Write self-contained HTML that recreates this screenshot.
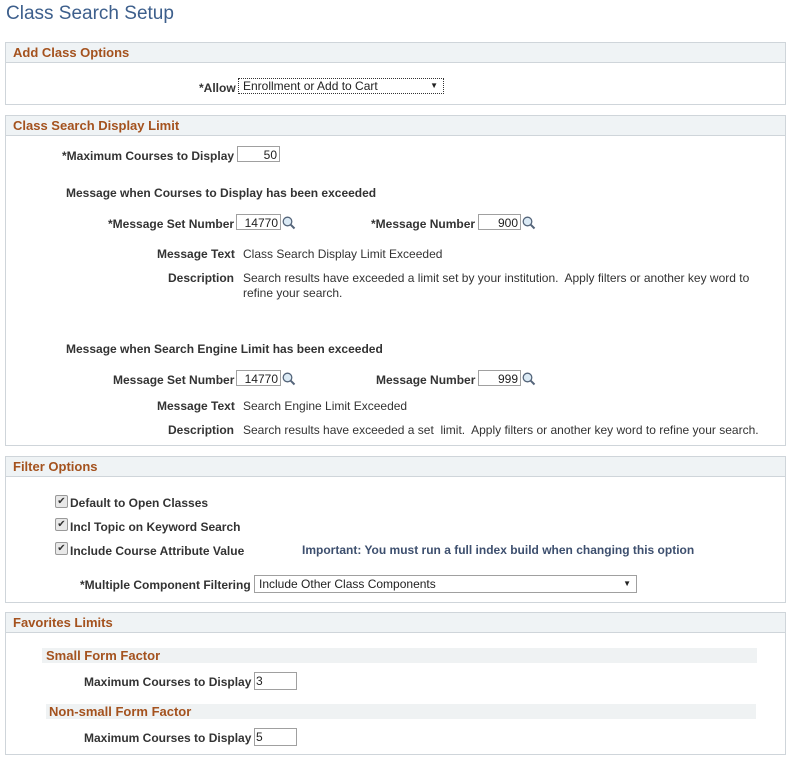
<!DOCTYPE html>
<html><head><style>
body{margin:0;width:791px;height:760px;background:#fff;font-family:"Liberation Sans",Arial,sans-serif;position:relative;overflow:hidden}
.a{position:absolute;white-space:nowrap}
.t{left:6px;top:3px;font-size:19px;color:#3d5f8c}
.box{position:absolute;left:5px;width:779px;border:1px solid #cfd5da;background:#fff}
.hd{height:19px;background:#eff3f5;border-bottom:1px solid #cfd5da;font-weight:bold;color:#a4521e;font-size:13px;line-height:19px;padding-left:7px}
.l{font-size:12px;font-weight:bold;color:#333}
.v{font-size:12px;color:#333}
.in{position:absolute;border:1px solid #a0a0a0;height:16px;font-size:12px;color:#222;line-height:16px;box-sizing:border-box;background:#fff}
.r{text-align:right;padding-right:2px}
.sub{position:absolute;height:15px;background:#eff2f3;font-weight:bold;color:#a4521e;font-size:13px;line-height:15px}
.cb{position:absolute;width:11px;height:11px;border:1px solid #999;background:#e8e8e8;border-radius:2px;font-size:10px;line-height:11px;text-align:center;color:#333}
</style></head><body>
<div class="a t">Class Search Setup</div>

<div class="box" style="top:42px;height:61px"><div class="hd">Add Class Options</div></div>
<div class="a l" style="left:199px;top:81px">*Allow</div>
<div class="in" style="left:238px;top:78px;width:206px;border:1px dotted #333;padding-left:4px;line-height:14px">Enrollment or Add to Cart<span style="position:absolute;right:5px;font-size:8px">&#9660;</span></div>

<div class="box" style="top:115px;height:329px"><div class="hd">Class Search Display Limit</div></div>
<div class="a l" style="left:62px;top:149px">*Maximum Courses to Display</div>
<div class="in r" style="left:237px;top:146px;width:43px">50</div>
<div class="a l" style="left:66px;top:186px">Message when Courses to Display has been exceeded</div>
<div class="a l" style="left:108px;top:217px">*Message Set Number</div>
<div class="in r" style="left:236px;top:214px;width:45px">14770</div>
<svg class="a" style="left:282px;top:216px" width="14" height="14"><circle cx="5.5" cy="5.5" r="4.3" fill="#dbeaf5" stroke="#55657a" stroke-width="1.3"/><line x1="8.6" y1="8.6" x2="12.5" y2="12.5" stroke="#55657a" stroke-width="2"/></svg>
<div class="a l" style="left:371px;top:217px">*Message Number</div>
<div class="in r" style="left:478px;top:214px;width:43px">900</div>
<svg class="a" style="left:522px;top:216px" width="14" height="14"><circle cx="5.5" cy="5.5" r="4.3" fill="#dbeaf5" stroke="#55657a" stroke-width="1.3"/><line x1="8.6" y1="8.6" x2="12.5" y2="12.5" stroke="#55657a" stroke-width="2"/></svg>
<div class="a l" style="left:157px;top:247px">Message Text</div>
<div class="a v" style="left:243px;top:247px">Class Search Display Limit Exceeded</div>
<div class="a l" style="left:168px;top:271px">Description</div>
<div class="a v" style="left:243px;top:271px;line-height:15px">Search results have exceeded a limit set by your institution.&nbsp; Apply filters or another key word to<br>refine your search.</div>
<div class="a l" style="left:66px;top:342px">Message when Search Engine Limit has been exceeded</div>
<div class="a l" style="left:113px;top:373px">Message Set Number</div>
<div class="in r" style="left:236px;top:370px;width:45px">14770</div>
<svg class="a" style="left:282px;top:372px" width="14" height="14"><circle cx="5.5" cy="5.5" r="4.3" fill="#dbeaf5" stroke="#55657a" stroke-width="1.3"/><line x1="8.6" y1="8.6" x2="12.5" y2="12.5" stroke="#55657a" stroke-width="2"/></svg>
<div class="a l" style="left:376px;top:373px">Message Number</div>
<div class="in r" style="left:478px;top:370px;width:43px">999</div>
<svg class="a" style="left:522px;top:372px" width="14" height="14"><circle cx="5.5" cy="5.5" r="4.3" fill="#dbeaf5" stroke="#55657a" stroke-width="1.3"/><line x1="8.6" y1="8.6" x2="12.5" y2="12.5" stroke="#55657a" stroke-width="2"/></svg>
<div class="a l" style="left:157px;top:399px">Message Text</div>
<div class="a v" style="left:243px;top:399px">Search Engine Limit Exceeded</div>
<div class="a l" style="left:168px;top:423px">Description</div>
<div class="a v" style="left:243px;top:423px">Search results have exceeded a set&nbsp; limit.&nbsp; Apply filters or another key word to refine your search.</div>

<div class="box" style="top:456px;height:145px"><div class="hd">Filter Options</div></div>
<div class="cb" style="left:55px;top:495px">&#10004;</div><div class="a l" style="left:70px;top:496px">Default to Open Classes</div>
<div class="cb" style="left:55px;top:518px">&#10004;</div><div class="a l" style="left:70px;top:520px">Incl Topic on Keyword Search</div>
<div class="cb" style="left:55px;top:542px">&#10004;</div><div class="a l" style="left:70px;top:544px">Include Course Attribute Value</div>
<div class="a l" style="left:302px;top:543px;color:#3d4f6e">Important: You must run a full index build when changing this option</div>
<div class="a l" style="left:80px;top:578px">*Multiple Component Filtering</div>
<div class="in" style="left:254px;top:575px;width:383px;height:18px;padding-left:4px;line-height:16px">Include Other Class Components<span style="position:absolute;right:5px;font-size:8px">&#9660;</span></div>

<div class="box" style="top:612px;height:141px"><div class="hd">Favorites Limits</div></div>
<div class="sub" style="left:42px;top:648px;width:711px;padding-left:4px">Small Form Factor</div>
<div class="a l" style="left:84px;top:675px">Maximum Courses to Display</div>
<div class="in" style="left:254px;top:672px;width:43px;height:18px;padding-left:1px">3</div>
<div class="sub" style="left:46px;top:704px;width:707px;padding-left:3px">Non-small Form Factor</div>
<div class="a l" style="left:84px;top:731px">Maximum Courses to Display</div>
<div class="in" style="left:254px;top:728px;width:43px;height:18px;padding-left:1px">5</div>
</body></html>
